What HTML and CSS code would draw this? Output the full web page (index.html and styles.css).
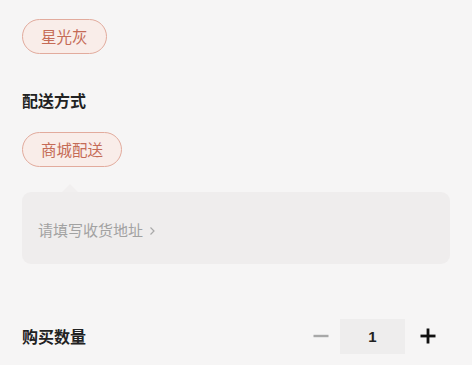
FILE: index.html
```html
<!DOCTYPE html>
<html lang="zh">
<head>
<meta charset="utf-8">
<link rel="stylesheet" href="styles.css">
</head>
<body>
<div class="page">
  <div class="label label-top">颜色</div>
  <div class="chips"><span class="chip">星光灰</span></div>

  <div class="label label-sec">配送方式</div>
  <div class="chips"><span class="chip">商城配送</span></div>

  <div class="address">
    <span class="address-text">请填写收货地址</span>
    <svg class="chev" width="7" height="10" viewBox="0 0 7 10"><path d="M1.5 1.5 L5 5 L1.5 8.5" fill="none" stroke="#a9a9a9" stroke-width="1.2"/></svg>
  </div>

  <div class="qty-row">
    <div class="label">购买数量</div>
    <div class="stepper">
      <span class="btn minus"><svg width="16" height="16" viewBox="0 0 16 16"><rect x="0.5" y="6.8" width="15" height="2.4" fill="#a8a8a8"/></svg></span>
      <span class="count">1</span>
      <span class="btn plus"><svg width="16" height="16" viewBox="0 0 16 16"><rect x="0.5" y="6.6" width="15" height="2.8" fill="#111"/><rect x="6.6" y="0.5" width="2.8" height="15" fill="#111"/></svg></span>
    </div>
  </div>
</div>
</body>
</html>
```

FILE: styles.css
```css
html, body {
  margin: 0;
  padding: 0;
  background: #f6f5f5;
}
body {
  font-family: "Noto Sans CJK SC", "Noto Sans", sans-serif;
  width: 472px;
  height: 365px;
  overflow: hidden;
}
.page {
  padding: 0 22px;
}
.label {
  font-size: 16px;
  line-height: 22px;
  font-weight: 700;
  color: #222;
}
.label-top {
  margin-top: -22px;
  color: #555;
}
.label-sec {
  margin-top: 35px;
}
.chips {
  display: flex;
  margin-top: 19px;
}
.label-sec + .chips {
  margin-top: 21px;
}
.chip {
  display: inline-block;
  box-sizing: border-box;
  height: 35px;
  line-height: 32px;
  padding: 0 18px;
  border: 1.5px solid #e2ab9d;
  border-radius: 18px;
  background: #f9ede9;
  color: #c56b56;
  font-size: 15.5px;
}
.address {
  position: relative;
  margin-top: 25px;
  height: 72px;
  box-sizing: border-box;
  padding: 26px 16px 0 16px;
  background: #efeded;
  border-radius: 9px;
  display: flex;
  align-items: flex-start;
}
.address::before {
  content: "";
  position: absolute;
  left: 40px;
  top: -8px;
  border-left: 8px solid transparent;
  border-right: 8px solid transparent;
  border-bottom: 8px solid #f1efef;
}
.address-text {
  font-size: 15px;
  line-height: 24px;
  color: #a2a2a2;
}
.chev {
  margin-left: 6px;
  margin-top: 8px;
}
.qty-row {
  margin-top: 54px;
  display: flex;
  align-items: center;
  justify-content: space-between;
  height: 36px;
}
.stepper {
  display: flex;
  align-items: center;
  margin-right: 6px;
}
.btn {
  width: 32px;
  height: 36px;
  display: flex;
  align-items: center;
  justify-content: center;
}
.minus {
  margin-right: 3px;
}
.count {
  width: 65px;
  height: 35px;
  line-height: 35px;
  text-align: center;
  background: #eeeded;
  font-family: "Liberation Sans", sans-serif;
  font-size: 15px;
  font-weight: 700;
  color: #222;
  margin-right: 7px;
}
```
